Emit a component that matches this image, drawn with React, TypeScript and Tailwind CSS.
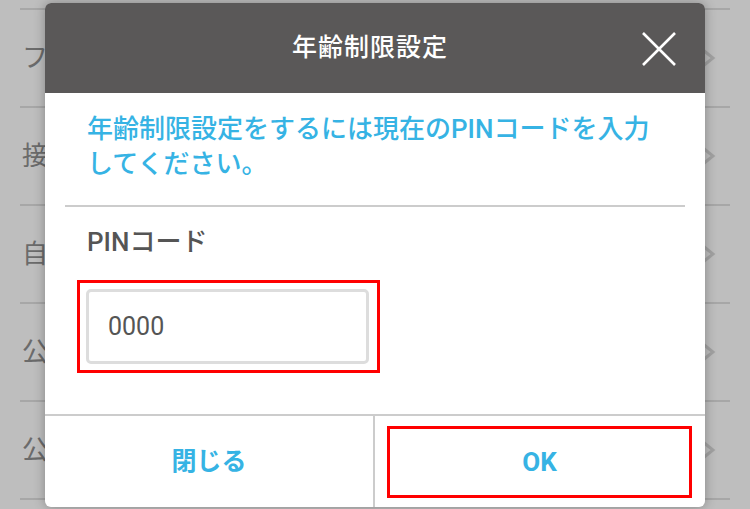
const ROWS = ["フ", "接", "自", "公", "公"];

function Chevron() {
  return (
    <svg width="16" height="20" viewBox="0 0 16 20" className="shrink-0">
      <path d="M3 2 L13 10 L3 18" fill="none" stroke="#a2a2a2" strokeWidth="3" />
    </svg>
  );
}

export default function App() {
  return (
    <div className="relative w-[750px] h-[509px] bg-[#bebebe] overflow-hidden font-['Roboto','Noto_Sans_CJK_JP',sans-serif]">
      {/* background settings list */}
      <div className="pt-[8px] px-[20px]">
        {ROWS.map((label, i) => (
          <div
            key={i}
            className="h-[98px] border-t-2 border-[#a7a7a7] flex items-center justify-between pl-[2px] pr-[14px]"
          >
            <span className="text-[26px] text-[#6b6b6b] whitespace-nowrap">{label}</span>
            <Chevron />
          </div>
        ))}
        <div className="h-[2px] bg-[#a7a7a7]" />
      </div>

      {/* dialog */}
      <div className="absolute left-[45px] top-[3px] w-[660px] h-[504px] bg-white rounded-[6px] overflow-hidden shadow-[0_0_12px_rgba(0,0,0,0.3)] flex flex-col">
        <div className="relative h-[90px] shrink-0 bg-[#5a5858] flex items-center justify-center pr-[10px]">
          <span className="text-white text-[25px] font-medium tracking-[1px]">年齢制限設定</span>
          <button className="absolute right-[29px] top-[29px] w-[34px] h-[34px]">
            <svg width="34" height="34" viewBox="0 0 34 34">
              <path d="M1 1 L33 33 M33 1 L1 33" stroke="white" strokeWidth="2.6" fill="none" />
            </svg>
          </button>
        </div>

        <div className="px-[42px] pt-[19px] text-[26px] leading-[35px] text-[#36b3e4] font-medium whitespace-nowrap">
          年齢制限設定をするには現在のPINコードを入力
          <br />
          してください。
        </div>

        <div className="mx-[20px] mt-[23px] h-[2px] bg-[#cccccc]" />

        <div className="pl-[42px] pt-[18px] text-[26px] leading-[35px] text-[#555555] font-medium">
          PINコード
        </div>

        <div className="ml-[32px] mt-[20px] w-[303px] h-[93px] border-[3px] border-[#ff0000] pt-[6px] pb-[6px] pl-[6px] pr-[8px]">
          <div className="h-full border-[3px] border-[#dddddd] rounded-[5px] flex items-center pl-[19px] text-[25px] text-[#555555]">
            0000
          </div>
        </div>

        <div className="flex-1" />

        <div className="h-[93px] shrink-0 border-t-2 border-[#cccccc] flex">
          <button className="w-[328px] flex items-center justify-center text-[25px] font-bold text-[#36b3e4]">
            閉じる
          </button>
          <div className="w-[2px] bg-[#cccccc]" />
          <div className="flex-1 pt-[10px] pb-[9px] pl-[12px] pr-[13px]">
            <button className="w-full h-full border-[3px] border-[#ff0000] flex items-center justify-center text-[26px] font-bold text-[#36b3e4]">
              OK
            </button>
          </div>
        </div>
      </div>
    </div>
  );
}
